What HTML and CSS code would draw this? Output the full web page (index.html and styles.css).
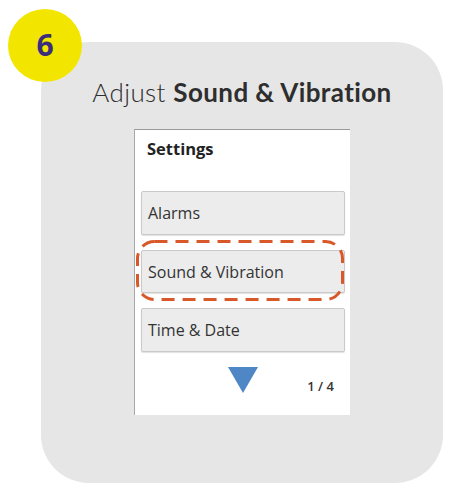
FILE: index.html
```html
<!DOCTYPE html>
<html>
<head>
<meta charset="utf-8">
<link rel="stylesheet" href="styles.css">
</head>
<body>
<div class="stage">
  <div class="card">
    <h1 class="title">Adjust <b>Sound &amp; Vibration</b></h1>
    <div class="screen">
      <div class="screen-head">Settings</div>
      <div class="menu">
        <div class="item">Alarms</div>
        <div class="item item-hl">Sound &amp; Vibration<svg class="ring" width="208" height="61" viewBox="0 0 208 61"><rect x="1.5" y="1.5" width="205" height="58" rx="17" ry="17" fill="none" stroke="#d9582a" stroke-width="3" stroke-dasharray="13 8"/></svg></div>
        <div class="item">Time &amp; Date</div>
      </div>
      <div class="pager">
        <svg class="arrow" width="30" height="26" viewBox="0 0 30 26"><polygon points="0,0 30,0 15,26" fill="#4f86c6"/></svg>
        <span class="count">1 / 4</span>
      </div>
    </div>
  </div>
  <div class="badge">6</div>
</div>
</body>
</html>
```
FILE: styles.css
```css
* { box-sizing: border-box; }
html, body { margin: 0; padding: 0; background: #fff; }
.stage { position: relative; width: 459px; height: 497px; }
.badge {
  position: absolute; left: 8px; top: 9px; z-index: 2;
  width: 74px; height: 73px; border-radius: 50%;
  background: #f2e600;
  color: #3b2c7c;
  font-family: "Open Sans", sans-serif; font-weight: 700; font-size: 30px;
  display: flex; align-items: center; justify-content: center;
  padding-bottom: 2px;
}
.card {
  position: absolute; left: 41px; top: 42px;
  width: 402px; height: 441px;
  background: #e6e6e6; border-radius: 48px;
  display: flex; flex-direction: column; align-items: center;
  padding-top: 35px;
}
.title {
  margin: 0; font-family: "Lato", sans-serif; font-weight: 300;
  font-size: 26px; color: #2e2e2e; letter-spacing: 0.4px;
  line-height: 31px;
}
.title b { font-weight: 700; }
.screen {
  margin-top: 21px;
  width: 216px; height: 286px;
  background: #fff;
  border-top: 1px solid #9a9a9a; border-left: 1px solid #a8a8a8;
  display: flex; flex-direction: column;
  font-family: "Open Sans", sans-serif;
  padding: 0 5px 0 6px;
}
.screen-head {
  font-weight: 700; font-size: 16.5px; color: #222;
  padding: 7px 0 0 6px; height: 61px;
}
.menu { display: flex; flex-direction: column; gap: 15px; }
.item {
  position: relative;
  height: 44px; background: #ececec;
  border: 1px solid #c9c9c9; border-radius: 2px;
  box-shadow: 0 1px 1px rgba(0,0,0,0.12);
  font-size: 16px; color: #333;
  display: flex; align-items: center; padding-left: 6px;
}
.item-hl { height: 43px; }
.ring {
  position: absolute; left: -6px; top: -11px;
}
.pager {
  position: relative; flex: 1;
  display: flex; justify-content: center; padding-top: 15px;
}
.arrow { display: block; }
.count {
  position: absolute; right: 11px; top: 25px;
  font-size: 13px; font-weight: 600; color: #333;
}
```
